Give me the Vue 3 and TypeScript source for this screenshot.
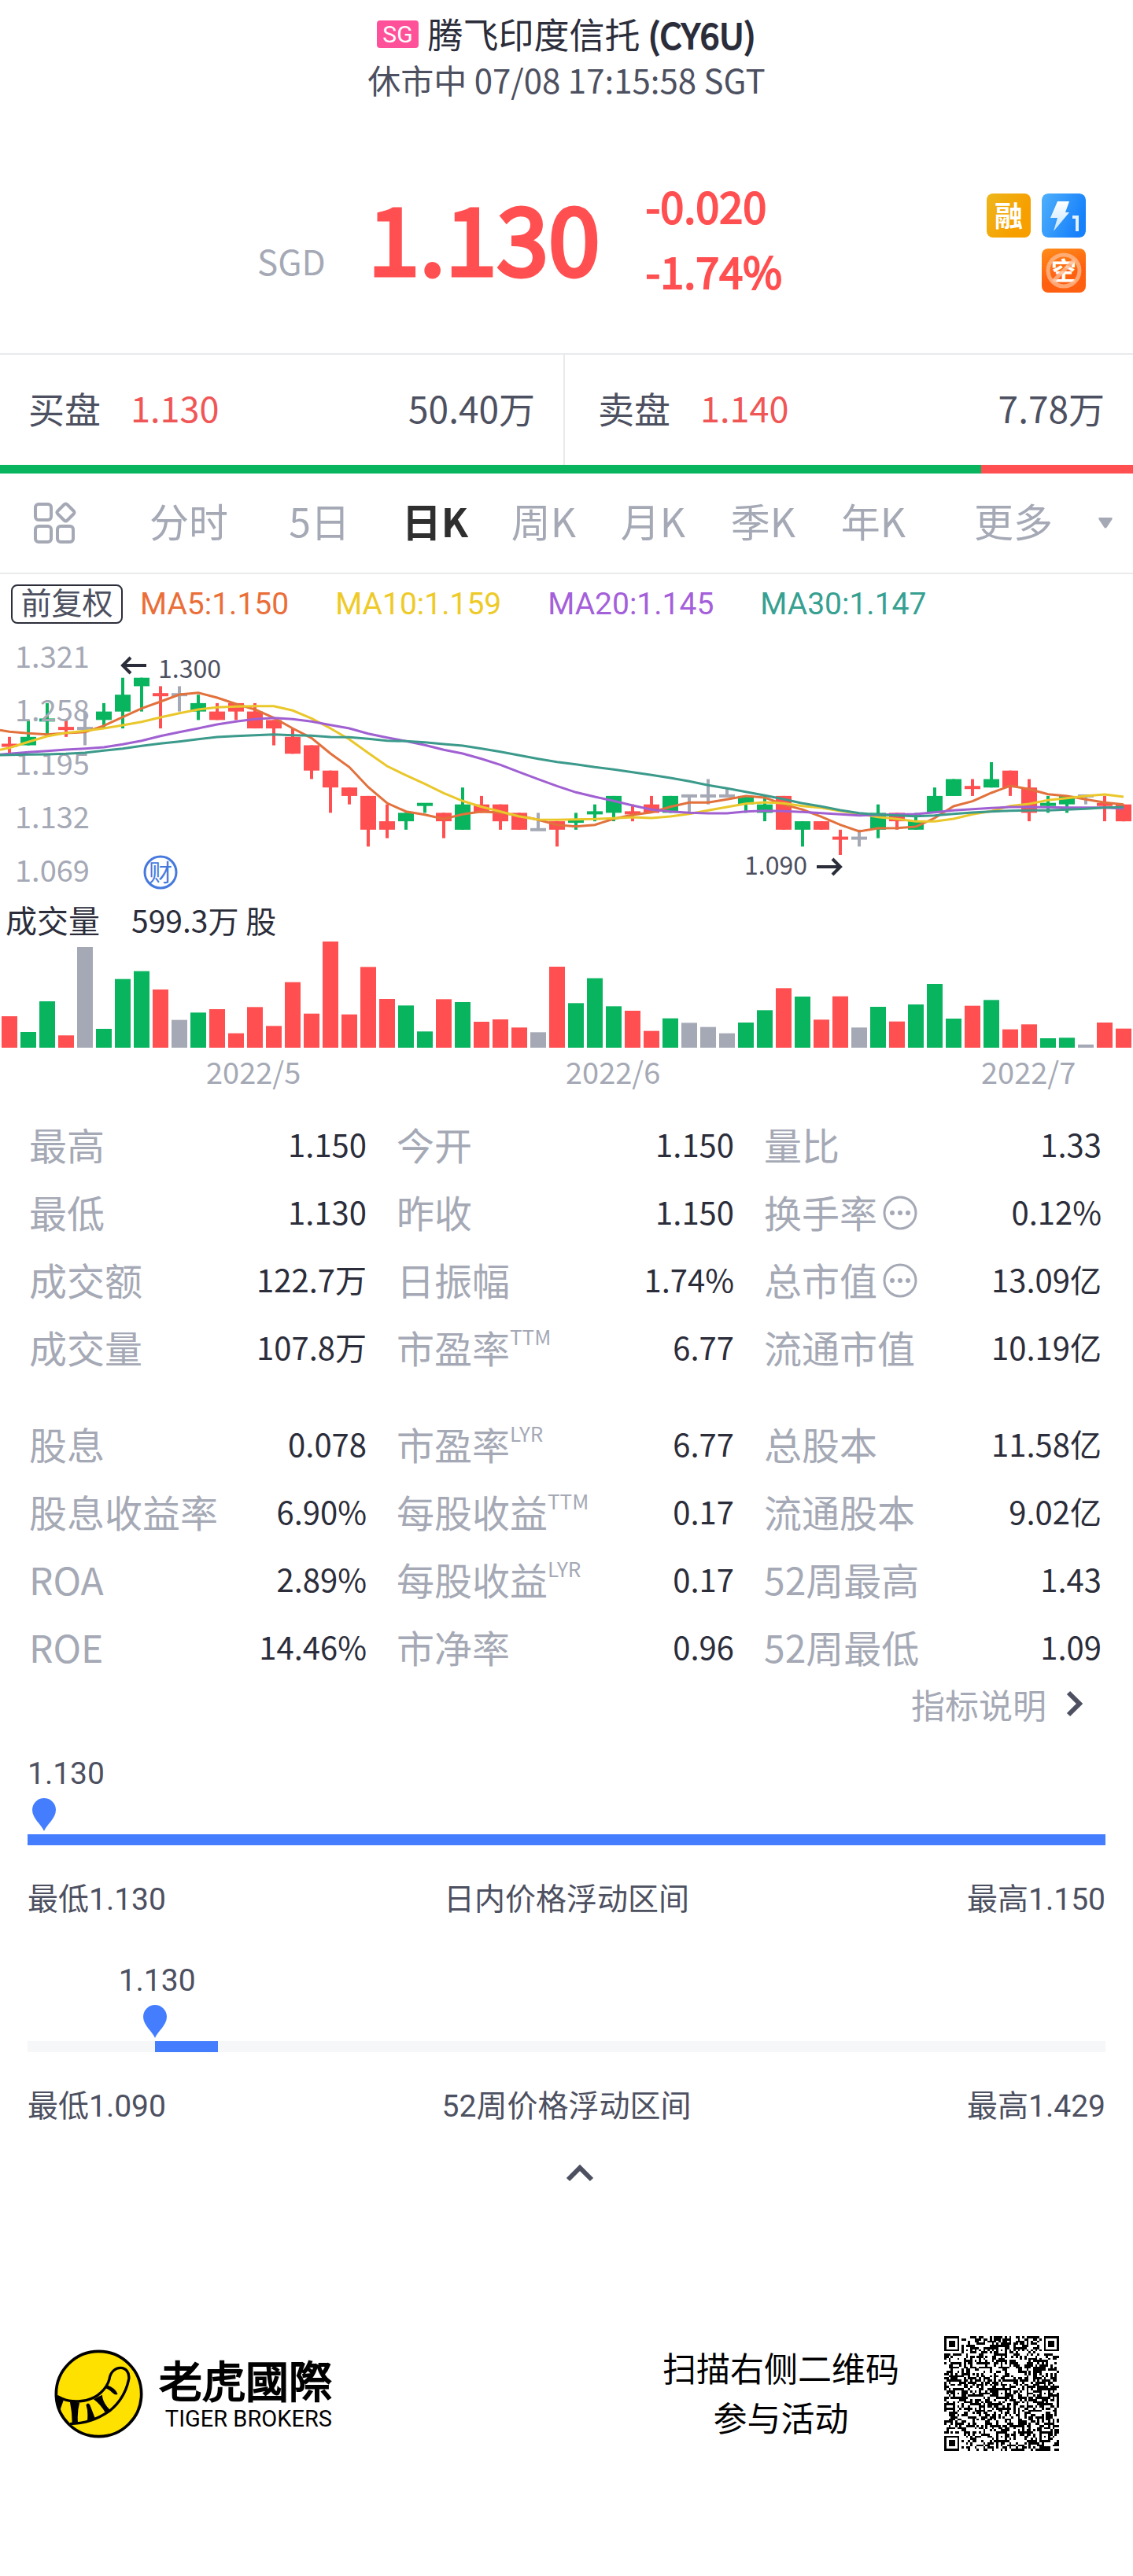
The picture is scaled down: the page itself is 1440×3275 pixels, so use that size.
<script setup lang="ts">
type Tone = 'r' | 'g' | 'x'
type Candle = [Tone, number, number, number, number]

const tabs = ['分时', '5日', '日K', '周K', '月K', '季K', '年K', '更多']
const activeTab = '日K'

const averages = [
  { text: 'MA5:1.150', tone: 'ma5' },
  { text: 'MA10:1.159', tone: 'ma10' },
  { text: 'MA20:1.145', tone: 'ma20' },
  { text: 'MA30:1.147', tone: 'ma30' },
]

const axis = ['1.321', '1.258', '1.195', '1.132', '1.069']

// tone, body top, body bottom, wick top, wick bottom; in cents below 1.300
const candles: Candle[] = [
  ['r', 8, 8, 7, 9], ['g', 7, 8, 5, 8], ['g', 5, 5, 3, 7], ['r', 6, 6, 5, 7], ['x', 6, 6, 4, 8],
  ['g', 4, 5, 3, 6], ['g', 2, 4, 0, 6], ['g', 0, 1, 0, 4], ['r', 2, 2, 1, 6], ['x', 2, 2, 1, 4],
  ['g', 3, 4, 2, 5], ['r', 4, 5, 3, 5], ['r', 3, 4, 3, 5], ['r', 4, 6, 3, 6], ['r', 5, 6, 5, 8],
  ['r', 7, 9, 6, 9], ['r', 8, 11, 8, 12], ['r', 11, 13, 11, 16], ['r', 13, 14, 13, 15], ['r', 14, 18, 14, 20],
  ['r', 17, 18, 15, 19], ['g', 16, 17, 16, 18], ['g', 15, 15, 15, 16], ['r', 16, 17, 16, 19], ['g', 15, 18, 13, 18],
  ['r', 15, 16, 14, 16], ['r', 15, 17, 15, 18], ['r', 16, 18, 16, 18], ['x', 18, 18, 16, 18], ['r', 17, 18, 17, 20],
  ['g', 17, 17, 16, 18], ['g', 16, 16, 15, 17], ['g', 14, 16, 14, 17], ['r', 16, 16, 15, 17], ['r', 15, 16, 14, 16],
  ['g', 14, 16, 14, 16], ['x', 14, 14, 14, 16], ['x', 14, 14, 12, 15], ['x', 14, 14, 13, 14], ['g', 14, 15, 14, 16],
  ['g', 15, 16, 14, 17], ['r', 14, 18, 14, 18], ['g', 17, 18, 17, 20], ['r', 17, 18, 17, 18], ['r', 19, 19, 18, 21],
  ['x', 19, 19, 18, 20], ['g', 16, 18, 15, 19], ['r', 16, 17, 16, 18], ['g', 17, 18, 16, 18], ['g', 14, 16, 13, 16],
  ['g', 12, 14, 12, 14], ['r', 13, 13, 12, 14], ['g', 12, 13, 10, 13], ['r', 11, 13, 11, 14], ['r', 13, 16, 12, 17],
  ['g', 15, 15, 14, 16], ['g', 14, 15, 14, 16], ['x', 14, 14, 14, 15], ['r', 15, 15, 14, 17], ['r', 15, 17, 15, 17],
]

const centre = (i: number): number => 12 + i * 24
const level = (t: number): number => Math.round((61.7 + t * 10.73) * 10) / 10

// Moving averages, in thirds of a chart unit; the first value sits on the left edge.
const lines: { tone: string; values: number[] }[] = [
  {
    tone: 'ma5',
    values: [595, 601, 607, 611, 606, 602, 578, 545, 512, 486, 459, 452, 471, 495, 516, 548, 588, 625, 684, 736, 812, 873, 905, 917, 934, 916, 905, 910, 921, 937, 956, 962, 956, 933, 918, 908, 887, 871, 871, 859, 846, 852, 878, 898, 925, 956, 981, 969, 968, 963, 930, 885, 866, 834, 807, 820, 839, 846, 859, 871, 878],
  },
  {
    tone: 'ma10',
    values: [670, 662, 640, 618, 605, 598, 588, 576, 563, 546, 530, 516, 508, 505, 503, 503, 520, 550, 588, 630, 682, 732, 767, 800, 835, 865, 887, 905, 924, 936, 937, 935, 934, 931, 927, 930, 924, 914, 901, 888, 875, 870, 874, 884, 891, 903, 914, 926, 934, 943, 943, 933, 916, 904, 884, 876, 862, 854, 846, 840, 849],
  },
  {
    tone: 'ma20',
    values: [688, 685, 679, 674, 669, 665, 660, 649, 635, 617, 602, 588, 573, 562, 553, 548, 553, 562, 575, 588, 608, 623, 637, 652, 670, 684, 704, 727, 755, 782, 808, 832, 849, 865, 882, 898, 905, 910, 912, 912, 905, 902, 904, 907, 911, 916, 920, 918, 916, 915, 908, 901, 896, 892, 888, 888, 889, 890, 890, 890, 894],
  },
  {
    tone: 'ma30',
    values: [690, 689, 688, 687, 685, 681, 673, 665, 655, 646, 638, 629, 621, 617, 614, 611, 614, 616, 621, 622, 628, 635, 637, 641, 648, 654, 665, 677, 691, 704, 716, 725, 736, 745, 755, 766, 777, 790, 805, 817, 830, 844, 858, 874, 886, 900, 911, 917, 920, 923, 920, 914, 909, 905, 902, 901, 901, 898, 895, 890, 888],
  },
]

const points = (values: number[]): string =>
  values.map((v, i) => `${i === 0 ? 0 : centre(i - 1)},${(v / 3 - 70).toFixed(1)}`).join(' ')

const volumes = [
  120, 60, 177, 47, 384, 72, 262, 292, 222, 106, 134, 147, 55, 155, 83, 250, 130, 405, 127, 308,
  186, 161, 62, 185, 174, 99, 108, 77, 59, 309, 170, 265, 158, 141, 64, 112, 95, 79, 55, 96,
  143, 227, 195, 107, 196, 77, 156, 100, 165, 243, 111, 160, 182, 70, 89, 36, 38, 12, 96, 73,
].map((v) => v / 3)

interface Stat { label: string; value: string; sup?: string; info?: boolean }
const stats: Stat[][] = [
  [
    { label: '最高', value: '1.150' }, { label: '今开', value: '1.150' }, { label: '量比', value: '1.33' },
    { label: '最低', value: '1.130' }, { label: '昨收', value: '1.150' }, { label: '换手率', value: '0.12%', info: true },
    { label: '成交额', value: '122.7万' }, { label: '日振幅', value: '1.74%' }, { label: '总市值', value: '13.09亿', info: true },
    { label: '成交量', value: '107.8万' }, { label: '市盈率', sup: 'TTM', value: '6.77' }, { label: '流通市值', value: '10.19亿' },
  ],
  [
    { label: '股息', value: '0.078' }, { label: '市盈率', sup: 'LYR', value: '6.77' }, { label: '总股本', value: '11.58亿' },
    { label: '股息收益率', value: '6.90%' }, { label: '每股收益', sup: 'TTM', value: '0.17' }, { label: '流通股本', value: '9.02亿' },
    { label: 'ROA', value: '2.89%' }, { label: '每股收益', sup: 'LYR', value: '0.17' }, { label: '52周最高', value: '1.43' },
    { label: 'ROE', value: '14.46%' }, { label: '市净率', value: '0.96' }, { label: '52周最低', value: '1.09' },
  ],
]

const ranges = [
  { name: '日内价格浮动区间', low: '最低1.130', high: '最高1.150', at: 0, size: 100 },
  { name: '52周价格浮动区间', low: '最低1.090', high: '最高1.429', at: 11.8, size: 5.9 },
]

// Code of 53 by 53 modules with finder, timing and alignment patterns.
const buildCode = (): string => {
  const n = 53
  let seed = 20220708
  const next = (): number => {
    seed = (Math.imul(seed, 1664525) + 1013904223) >>> 0
    return seed / 4294967296
  }
  const ring = (x: number, y: number, cx: number, cy: number): number => Math.max(Math.abs(x - cx), Math.abs(y - cy))
  let d = ''
  for (let y = 0; y < n; y++) {
    for (let x = 0; x < n; x++) {
      let on = next() < 0.5
      if (x === 6 || y === 6) on = (x + y) % 2 === 0
      for (const [cx, cy] of [[26, 6], [6, 26], [26, 26], [46, 26], [26, 46], [46, 46]]) {
        const r = ring(x, y, cx, cy)
        if (r <= 2) on = r !== 1
      }
      for (const [cx, cy] of [[3, 3], [49, 3], [3, 49]]) {
        const r = ring(x, y, cx, cy)
        if (r <= 4) on = r === 3 || r <= 1
      }
      if (on) d += `M${x} ${y}h1v1h-1z`
    }
  }
  return d
}
const code = buildCode()
</script>

<template>
  <main class="page">
    <header class="head">
      <h1 class="title"><span class="market">SG</span><span>腾飞印度信托 <b>(CY6U)</b></span></h1>
      <p class="status">休市中 07/08 17:15:58 SGT</p>
    </header>

    <section class="quote">
      <div class="last"><span class="currency">SGD</span><strong class="price">1.130</strong></div>
      <div class="change"><span>-0.020</span><span>-1.74%</span></div>
      <div class="badges">
        <span class="badge margin">融</span>
        <svg class="badge" viewBox="0 0 56 56" aria-hidden="true">
          <defs>
            <linearGradient id="flash" x1="0" y1="0" x2="1" y2="0.4">
              <stop offset="0" stop-color="#4fb0fb" /><stop offset="1" stop-color="#1781fb" />
            </linearGradient>
            <linearGradient id="bolt" x1="0" y1="0" x2="0" y2="1">
              <stop offset="0" stop-color="#fff" /><stop offset="1" stop-color="#c2e4ff" />
            </linearGradient>
          </defs>
          <rect width="56" height="56" rx="8" fill="url(#flash)" />
          <path d="M20 10h15l-5 14h5L15 48l5-17h-9z" fill="url(#bolt)" />
          <path d="M39 30h6v18" fill="none" stroke="#e4f1ff" stroke-width="4" />
        </svg>
        <span class="badge short">空
          <svg class="ban" viewBox="0 0 56 56" aria-hidden="true">
            <circle cx="28" cy="28" r="20" /><path d="M14 42 42 14" />
          </svg>
        </span>
      </div>
    </section>

    <section class="book">
      <div class="side"><span>买盘</span><span class="down">1.130</span><span class="amount">50.40万</span></div>
      <div class="side"><span>卖盘</span><span class="down">1.140</span><span class="amount">7.78万</span></div>
    </section>
    <div class="depth"><div class="depth-buy" :style="{ width: '86.6%' }"></div></div>

    <nav class="tabs">
      <button class="layout" type="button" aria-label="指标">
        <svg viewBox="0 0 54 54" aria-hidden="true">
          <rect x="2" y="3" width="20" height="20" rx="4" />
          <rect x="2" y="31" width="20" height="20" rx="4" />
          <rect x="30" y="31" width="20" height="20" rx="4" />
          <path d="M38.500 3.500q2-2 4 0l8 8q2 2 0 4l-8 8q-2 2-4 0l-8-8q-2-2 0-4z" />
        </svg>
      </button>
      <button v-for="t in tabs" :key="t" type="button" class="tab" :class="{ active: t === activeTab }">{{ t }}</button>
      <svg class="more" viewBox="0 0 18 14" aria-hidden="true"><path d="M2 0h14q3 0 1 3l-6 9q-2 3-4 0L1 3Q-1 0 2 0z" /></svg>
    </nav>

    <section class="legend">
      <button type="button" class="adjust">前复权</button>
      <span v-for="m in averages" :key="m.tone" :class="m.tone">{{ m.text }}</span>
    </section>

    <svg class="chart" viewBox="0 0 1440 340" role="img" aria-label="日K">
      <g v-for="(c, i) in candles" :key="i" :class="c[0]">
        <rect :x="centre(i) - 2" :y="level(c[3])" width="4" :height="(c[4] - c[3]) * 10.73" />
        <rect
          :x="centre(i) - 10"
          :y="c[1] === c[2] ? level(c[1]) - 2 : level(c[1])"
          width="20"
          :height="c[1] === c[2] ? 4 : (c[2] - c[1]) * 10.73"
        />
      </g>
      <text v-for="(a, i) in axis" :key="a" class="axis" x="19" :y="49 + i * 68">{{ a }}</text>
      <polyline v-for="l in lines" :key="l.tone" :class="['line', l.tone]" :points="points(l.values)" />
      <g class="arrow">
        <path d="M186 46h-29M166 36l-10 10 10 10" />
        <path d="M1038 302h29M1058 292l10 10-10 10" />
      </g>
      <text class="note" x="201" y="62">1.300</text>
      <text class="note" x="946" y="312">1.090</text>
      <circle class="event" cx="204" cy="309" r="20" />
      <text class="event-text" x="204" y="320" text-anchor="middle">财</text>
    </svg>

    <p class="volume-head"><span>成交量</span><span class="volume-total">599.3万 股</span></p>
    <svg class="chart" viewBox="0 0 1440 200" role="img" aria-label="成交量">
      <rect
        v-for="(v, i) in volumes"
        :key="i"
        :class="candles[i][0]"
        :x="centre(i) - 10"
        :y="135 - v"
        width="20"
        :height="v"
      />
      <text class="axis" x="262" y="181">2022/5</text>
      <text class="axis" x="719" y="181">2022/6</text>
      <text class="axis" x="1247" y="181">2022/7</text>
    </svg>

    <section class="stats">
      <dl v-for="(group, g) in stats" :key="g" class="group">
        <div v-for="s in group" :key="s.label + (s.sup ?? '')" class="stat">
          <dt>
            {{ s.label }}<sup v-if="s.sup">{{ s.sup }}</sup>
            <svg v-if="s.info" class="info" viewBox="0 0 46 46" aria-hidden="true">
              <circle class="info-ring" cx="23" cy="23" r="20" />
              <circle cx="13" cy="23" r="3" /><circle cx="23" cy="23" r="3" /><circle cx="33" cy="23" r="3" />
            </svg>
          </dt>
          <dd>{{ s.value }}</dd>
        </div>
      </dl>
      <a class="explain" href="#">指标说明
        <svg viewBox="0 0 22 34" aria-hidden="true"><path d="M4 3 18 17 4 31" /></svg>
      </a>
    </section>

    <section class="ranges">
      <div v-for="r in ranges" :key="r.name" class="range">
        <span class="mark" :style="{ marginLeft: `max(0px, calc(${r.at}% - 46px))` }">1.130</span>
        <svg class="pin" viewBox="0 0 32 42" aria-hidden="true" :style="{ marginLeft: `max(5px, calc(${r.at}% - 16px))` }">
          <path d="M16 42C13 34 1 26 1 15a15 15 0 0 1 30 0c0 11-12 19-15 27z" />
        </svg>
        <div class="track"><div class="fill" :style="{ marginLeft: `${r.at}%`, width: `${r.size}%` }"></div></div>
        <div class="range-text"><span>{{ r.low }}</span><span>{{ r.name }}</span><span>{{ r.high }}</span></div>
      </div>
    </section>

    <button type="button" class="collapse" aria-label="收起">
      <svg viewBox="0 0 36 22" aria-hidden="true"><path d="M3 19 18 4l15 15" /></svg>
    </button>

    <footer class="foot">
      <svg class="logo" viewBox="208 142 338 338" aria-hidden="true">
        <circle cx="377" cy="311" r="162" fill="#ffe100" />
        <path d="M219 320C270 350 345 345 386 305Q410 282 417 256C425 195 500 200 491 256C480 310 450 350 418 376Q350 424 267 425" fill="none" stroke="#000" stroke-width="10" />
        <path d="M214 316 243 336 228 378Q214 350 214 316zM267 338 304 345Q294 380 298 424L276 426Q276 380 267 338zM329 353Q336 341 343 352L364 406 333 416Q338 380 329 353zM357 331 390 315Q392 345 420 372L403 384Q384 350 357 331zM408 277Q440 287 449 312Q440 318 427 305 415 291 399 289z" />
        <circle cx="377" cy="311" r="162" fill="none" stroke="#000" stroke-width="11" />
      </svg>
      <div class="brand"><strong>老虎國際</strong><span>TIGER BROKERS</span></div>
      <p class="invite">扫描右侧二维码<br />参与活动</p>
      <svg class="code" viewBox="0 0 53 53" role="img" aria-label="二维码" shape-rendering="crispEdges"><path :d="code" /></svg>
    </footer>
  </main>
</template>

<style>
body {
  margin: 0;
  background: #fff;
}
</style>

<style scoped>
.page {
  font-family: "Noto Sans CJK SC", sans-serif;
  color: #4d5060;
  background: #fff;
}
button {
  padding: 0;
  border: 0;
  background: none;
  color: inherit;
  font: inherit;
}
p, h1, dl, dd {
  margin: 0;
}
.head {
  padding-top: 14px;
  text-align: center;
}
.title {
  display: flex;
  justify-content: center;
  align-items: center;
  gap: 12px;
  font-size: 45px;
  line-height: 57px;
  font-weight: 400;
  color: #2b2d3a;
}
.title b {
  font-size: 44px;
  font-weight: 400;
  -webkit-text-stroke: 2px currentColor;
}
.market {
  padding: 0 7px;
  border-radius: 4px;
  background: #ff5199;
  color: #fff;
  font-family: Roboto, sans-serif;
  font-size: 30px;
  line-height: 35px;
}
.status {
  font-size: 42px;
  line-height: 57px;
}
.quote {
  display: flex;
  align-items: center;
  padding: 90px 60px 64px 327px;
  color: #ff4f50;
}
.last {
  display: flex;
  align-items: baseline;
  gap: 54px;
  padding-top: 8px;
}
.currency {
  font-size: 44px;
  color: #a5a9b5;
}
.price {
  font-size: 118px;
  line-height: 100px;
  font-weight: 400;
  -webkit-text-stroke: 5px currentColor;
}
.change {
  display: flex;
  flex-direction: column;
  margin-left: 58px;
  font-size: 54px;
  line-height: 83px;
  -webkit-text-stroke: 2px currentColor;
}
.badges {
  display: grid;
  grid-template-columns: 56px 56px;
  gap: 14px;
  margin: 14px 0 0 auto;
}
.badge {
  position: relative;
  width: 56px;
  height: 56px;
  border-radius: 8px;
  color: #fff;
  font-size: 36px;
  line-height: 52px;
  font-weight: 700;
  text-align: center;
}
.margin {
  background: linear-gradient(120deg, #edb71c, #f79f00 70%);
}
.short {
  grid-column: 2;
  background: linear-gradient(160deg, #ff8d18, #ff5f10 60%);
  font-size: 32px;
}
.ban {
  position: absolute;
  inset: 0;
  fill: none;
  stroke: #ffb98d;
  stroke-opacity: 0.8;
  stroke-width: 5;
}
.book {
  display: grid;
  grid-template-columns: 716fr 724fr;
  border-top: 2px solid #e9eaec;
  font-size: 46px;
  line-height: 134px;
}
.side {
  display: flex;
  padding: 0 36px 6px;
}
.side + .side {
  border-left: 2px solid #e9eaec;
  padding-left: 42px;
}
.down {
  margin-left: 38px;
  color: #f05656;
  font-size: 45px;
}
.amount {
  margin-left: auto;
}
.depth {
  background: #ff4f50;
}
.depth-buy {
  height: 11px;
  background: #09b45f;
}
.tabs {
  display: grid;
  grid-template-columns: 152fr 176fr 156fr 138fr 138fr 140fr 140fr 140fr 216fr 44fr;
  align-items: center;
  border-bottom: 2px solid #e9eaec;
  color: #a5a9b5;
  font-size: 50px;
}
.tab {
  padding-bottom: 8px;
  line-height: 118px;
}
.active {
  color: #2f2f30;
  font-weight: 700;
}
.layout {
  display: flex;
  padding-left: 43px;
}
.layout svg {
  width: 54px;
  fill: none;
  stroke: #a5a9b5;
  stroke-width: 4;
}
.more {
  width: 18px;
  fill: #a5a9b5;
}
.legend {
  display: flex;
  align-items: center;
  gap: 59px;
  padding: 13px 14px 7px;
  font-family: Roboto, "Noto Sans CJK SC", sans-serif;
  font-size: 39px;
  line-height: 46px;
}
.adjust {
  width: 142px;
  height: 50px;
  margin-right: -37px;
  box-sizing: border-box;
  border: 2px solid #2b2d3a;
  border-radius: 8px;
}
.ma5 { color: #ea6e38; stroke: #e2713c; }
.ma10 { color: #eeca28; stroke: #eac72b; }
.ma20 { color: #a45fda; stroke: #a060d2; }
.ma30 { color: #36a091; stroke: #3b9a8b; }
.chart {
  display: block;
  width: 100%;
}
.r { fill: #ff4f50; }
.g { fill: #09b45f; }
.x { fill: #a5a9b5; }
.line {
  fill: none;
  stroke-width: 3;
}
.axis {
  fill: #a5a9b5;
  font-size: 38px;
}
.note {
  fill: #4d5060;
  font-size: 32px;
}
.arrow {
  fill: none;
  stroke: #2b2d3a;
  stroke-width: 4;
}
.event {
  fill: none;
  stroke: #4679dd;
  stroke-width: 3;
}
.event-text {
  fill: #4679dd;
  font-size: 30px;
}
.volume-head {
  display: flex;
  gap: 40px;
  padding: 2px 0 0 7px;
  font-size: 40px;
  line-height: 55px;
  color: #2b2d3a;
}
.volume-total {
  font-size: 39px;
}
.stats {
  padding: 14px 40px 0 37px;
}
.group {
  display: grid;
  grid-template-columns: repeat(3, 1fr);
  column-gap: 38px;
}
.group + .group {
  margin-top: 37px;
}
.stat {
  display: flex;
  justify-content: space-between;
  line-height: 86px;
}
.stat dt {
  display: flex;
  align-items: center;
  font-size: 48px;
  color: #a5a9b5;
}
.stat sup {
  align-self: flex-start;
  font-size: 26px;
  line-height: 60px;
}
.stat dd {
  font-size: 40px;
  color: #2b2d3a;
}
.info {
  width: 46px;
  margin: 4px 0 0 6px;
  fill: #a5a9b5;
}
.info-ring {
  fill: none;
  stroke: #a5a9b5;
  stroke-width: 3;
}
.explain {
  display: flex;
  justify-content: flex-end;
  align-items: center;
  gap: 24px;
  padding-right: 24px;
  font-size: 43px;
  line-height: 60px;
  color: #a5a9b5;
  text-decoration: none;
}
.explain svg {
  width: 22px;
}
.explain path, .collapse path {
  fill: none;
  stroke: #4d5060;
  stroke-width: 6;
}
.ranges {
  display: flex;
  flex-direction: column;
  gap: 63px;
  padding: 39px 35px 0;
  font-family: Roboto, "Noto Sans CJK SC", sans-serif;
  font-size: 39px;
  line-height: 40px;
}
.range {
  display: flex;
  flex-direction: column;
}
.pin {
  width: 32px;
  margin: 11px 0 4px;
  fill: #447eff;
}
.track {
  background: #f6f7f9;
}
.fill {
  height: 14px;
  background: #447eff;
}
.range-text {
  display: flex;
  justify-content: space-between;
  margin-top: 49px;
}
.collapse {
  display: block;
  margin: 54px auto 0;
  padding-left: 34px;
}
.collapse svg {
  display: block;
  width: 36px;
}
.foot {
  display: flex;
  align-items: center;
  padding: 196px 94px 159px 69px;
  color: #000;
}
.logo {
  width: 113px;
}
.brand {
  display: flex;
  flex-direction: column;
  align-items: flex-end;
  gap: 4px;
  margin-left: 20px;
}
.brand strong {
  font-family: "Noto Sans CJK TC", sans-serif;
  font-size: 55px;
  line-height: 60px;
  font-weight: 400;
  -webkit-text-stroke: 2px currentColor;
}
.brand span {
  font-family: Roboto, sans-serif;
  font-size: 29px;
  line-height: 34px;
}
.invite {
  margin-left: auto;
  padding-bottom: 4px;
  font-size: 43px;
  line-height: 63px;
  text-align: center;
}
.code {
  width: 146px;
  margin-left: 57px;
}
</style>
